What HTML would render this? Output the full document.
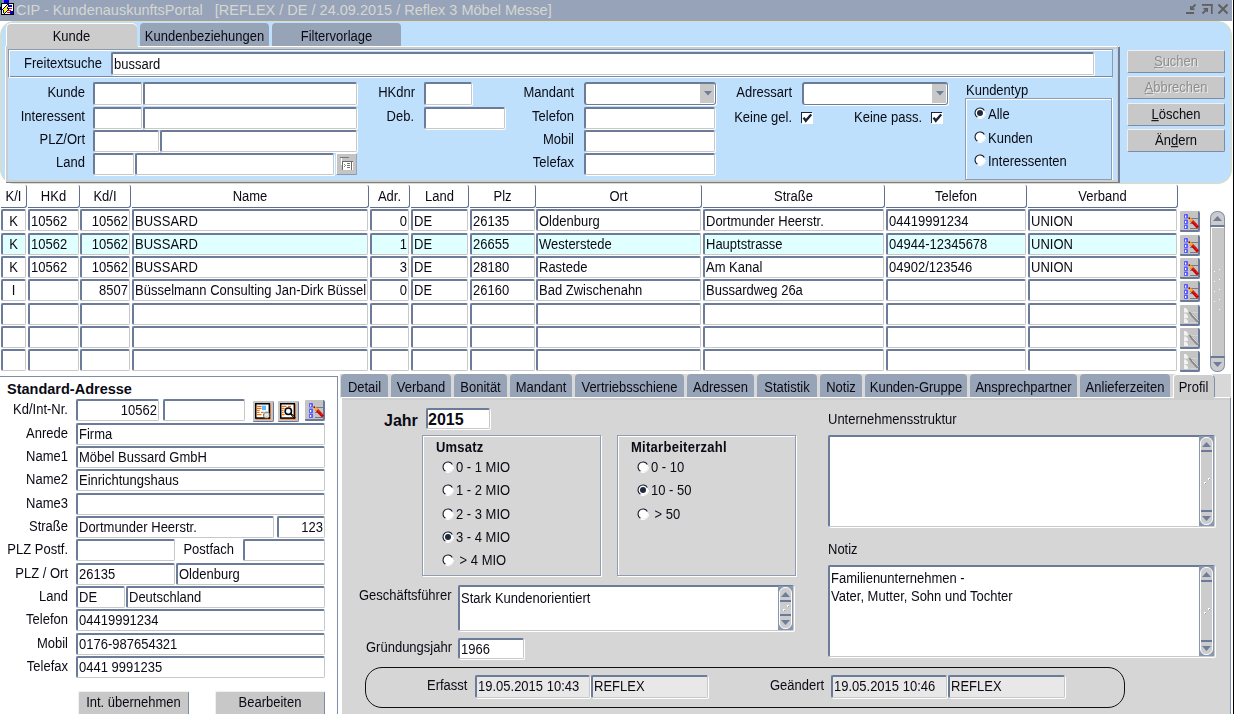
<!DOCTYPE html>
<html><head><meta charset="utf-8">
<style>
*{margin:0;padding:0;box-sizing:border-box}
html,body{width:1234px;height:714px;overflow:hidden;background:#fff}
body{position:relative;font-family:"Liberation Sans",sans-serif;font-size:13px;color:#0a0a14}
div,span,svg{position:absolute}
.t{white-space:pre;line-height:15px;transform:scaleY(1.1);transform-origin:0 12px}
.in{background:#fff;border-top:2px solid #6B7B98;border-left:2px solid #6B7B98;border-right:1px solid #C8C8C8;border-bottom:1px solid #C8C8C8;border-radius:2px;box-shadow:1px 1px 0 #fff}
.tab{background:#97A4B8;border-radius:4px 4px 0 0}
.btn{background:#C8C8C8;border-top:1px solid #F0F0F0;border-left:1px solid #F0F0F0;border-right:1px solid #7D8CA6;border-bottom:1px solid #7D8CA6;border-radius:2px}
.hd{background:#fff;border-right:1px solid #5F6F8E;border-bottom:1px solid #5F6F8E;border-radius:0 2px 3px 0}
</style></head><body>

<div style="left:0px;top:0px;width:1232px;height:21px;background:#97A3B8"></div>
<div style="left:1233px;top:0px;width:1px;height:714px;background:#000"></div>
<svg style="left:0px;top:0px" width="16" height="16" viewBox="0 0 16 16" shape-rendering="crispEdges">
<rect x="0" y="0" width="2" height="7" fill="#3a9a6a"/>
<rect x="2" y="0" width="2" height="3" fill="#8a7ae0"/>
<rect x="4" y="0" width="5" height="3" fill="#0000e0"/>
<rect x="0" y="7" width="1" height="3" fill="#000080"/>
<rect x="1" y="3" width="13" height="12" fill="#000"/>
<rect x="2" y="4" width="11" height="10" fill="#fff"/>
<rect x="9" y="5" width="3" height="2" fill="#0000e0"/>
<rect x="8" y="8" width="4" height="1" fill="#f00000"/>
<rect x="8" y="10" width="3" height="1" fill="#f00000"/>
<rect x="7" y="12" width="3" height="1" fill="#f00000"/>
<rect x="10" y="11" width="3" height="3" fill="#0000e0"/>
<rect x="7" y="4" width="1" height="1" fill="#000090"/>
<rect x="8" y="4" width="1" height="1" fill="#000090"/>
<rect x="6" y="5" width="1" height="1" fill="#000090"/>
<rect x="7" y="5" width="1" height="1" fill="#ffff00"/>
<rect x="8" y="5" width="1" height="1" fill="#000090"/>
<rect x="5" y="6" width="1" height="1" fill="#000090"/>
<rect x="6" y="6" width="1" height="1" fill="#ffff00"/>
<rect x="7" y="6" width="1" height="1" fill="#ffff00"/>
<rect x="8" y="6" width="1" height="1" fill="#000090"/>
<rect x="4" y="7" width="1" height="1" fill="#000090"/>
<rect x="5" y="7" width="1" height="1" fill="#ffff00"/>
<rect x="6" y="7" width="1" height="1" fill="#ffff00"/>
<rect x="7" y="7" width="1" height="1" fill="#000090"/>
<rect x="3" y="8" width="1" height="1" fill="#000090"/>
<rect x="4" y="8" width="1" height="1" fill="#ffff00"/>
<rect x="5" y="8" width="1" height="1" fill="#ffff00"/>
<rect x="6" y="8" width="1" height="1" fill="#ffff00"/>
<rect x="7" y="8" width="1" height="1" fill="#000090"/>
<rect x="8" y="8" width="1" height="1" fill="#000090"/>
<rect x="2" y="9" width="1" height="1" fill="#000090"/>
<rect x="3" y="9" width="1" height="1" fill="#ffff00"/>
<rect x="4" y="9" width="1" height="1" fill="#ffff00"/>
<rect x="5" y="9" width="1" height="1" fill="#ffff00"/>
<rect x="6" y="9" width="1" height="1" fill="#ffff00"/>
<rect x="7" y="9" width="1" height="1" fill="#ffff00"/>
<rect x="8" y="9" width="1" height="1" fill="#000090"/>
<rect x="3" y="10" width="1" height="1" fill="#000090"/>
<rect x="4" y="10" width="1" height="1" fill="#ffff00"/>
<rect x="5" y="10" width="1" height="1" fill="#ffff00"/>
<rect x="6" y="10" width="1" height="1" fill="#ffff00"/>
<rect x="7" y="10" width="1" height="1" fill="#000090"/>
<rect x="3" y="11" width="1" height="1" fill="#000090"/>
<rect x="4" y="11" width="1" height="1" fill="#ffff00"/>
<rect x="5" y="11" width="1" height="1" fill="#ffff00"/>
<rect x="6" y="11" width="1" height="1" fill="#000090"/>
<rect x="3" y="12" width="1" height="1" fill="#000090"/>
<rect x="4" y="12" width="1" height="1" fill="#ffff00"/>
<rect x="5" y="12" width="1" height="1" fill="#000090"/>
<rect x="3" y="13" width="1" height="1" fill="#ffff00"/>
<rect x="4" y="13" width="1" height="1" fill="#000090"/>
</svg>
<span class="t" style="left:16px;top:1px;font-size:14.5px;line-height:18px;color:#D5D7D2;transform:none">CIP - KundenauskunftsPortal   [REFLEX / DE / 24.09.2015 / Reflex 3 Möbel Messe]</span>
<svg style="left:1184px;top:0px" width="46" height="18" viewBox="0 0 46 18">
<g fill="#5F5F5F">
<rect x="2" y="12" width="8" height="2"/>
<rect x="6" y="6" width="1.6" height="4"/><rect x="6" y="8.4" width="4.5" height="1.6"/>
<rect x="18" y="4" width="10.6" height="1.8"/><rect x="27" y="4" width="1.6" height="10"/>
<rect x="19.5" y="8" width="4.5" height="1.6"/><rect x="22.4" y="8" width="1.6" height="4"/>
</g>
<g stroke="#5F5F5F" stroke-width="2" fill="none">
<path d="M11.5 4.5 L6.8 9.2" stroke-width="1.8"/>
<path d="M18.5 13.5 L23.2 8.8" stroke-width="1.8"/>
<path d="M34.5 4.5 L43.5 13.5 M43.5 4.5 L34.5 13.5"/>
</g></svg>
<div style="left:0px;top:21px;width:1232px;height:163px;background:#BEE0FC;border:1px solid #E2DDB5;border-radius:14px;border-top-left-radius:14px"></div>
<div style="left:6px;top:23px;width:131px;height:24px;background:#CCCCCC;border-radius:5px 5px 0 0;border-top:1px solid #fff;border-left:1px solid #fff"></div>
<span class="t" style="left:6px;width:131px;text-align:center;top:29px;font-size:13px;">Kunde</span>
<div style="left:140px;top:23px;width:129px;height:23px;background:#97A4B8;border-radius:4px 4px 0 0"></div>
<span class="t" style="left:140px;width:129px;text-align:center;top:29px;font-size:13px;">Kundenbeziehungen</span>
<div style="left:272px;top:23px;width:129px;height:23px;background:#97A4B8;border-radius:4px 4px 0 0"></div>
<span class="t" style="left:272px;width:129px;text-align:center;top:29px;font-size:13px;">Filtervorlage</span>
<div style="left:5px;top:46px;width:1115px;height:137px;border-left:1px solid #fff;border-top:1px solid #fff"></div>
<div style="left:6px;top:46px;width:1114px;height:137px;border-left:2px solid #CCCCCC;border-bottom:3px solid #D0D0D0;border-right:1px solid #D0D0D0;border-top:0"></div>
<div style="left:1117px;top:47px;width:1px;height:135px;background:#D0D0D0"></div>
<div style="left:1118px;top:47px;width:2px;height:136px;border-right:1px solid #6F7F9B;border-left:1px solid #6F7F9B"></div>
<div style="left:6px;top:182px;width:1114px;height:1px;background:#6F7F9B"></div>
<div style="left:8px;top:46px;width:1110px;height:3px;background:#CCCCCC"></div>
<div style="left:138px;top:46px;width:979px;height:1px;background:#fff"></div>
<div style="left:8px;top:49px;width:1105px;height:29px;border-top:1px solid #8D99AE;border-left:1px solid #8D99AE;border-right:1px solid #8D99AE;border-bottom:1px solid #fff;box-shadow:inset 1px 1px 0 #fff, inset 0 -1px 0 #7A89A3"></div>
<span class="t" style="left:24px;top:56px;font-size:13px;">Freitextsuche</span>
<div class="in" style="left:111px;top:52px;width:983px;height:23px;background:#fff"></div>
<span class="t" style="left:114px;top:57px;font-size:13px;">bussard</span>
<span class="t" style="right:1149px;top:85px;font-size:13px;">Kunde</span>
<span class="t" style="right:1149px;top:109px;font-size:13px;">Interessent</span>
<span class="t" style="right:1149px;top:132px;font-size:13px;">PLZ/Ort</span>
<span class="t" style="right:1149px;top:155px;font-size:13px;">Land</span>
<div class="in" style="left:93px;top:82px;width:49px;height:23px;background:#fff"></div>
<div class="in" style="left:143px;top:82px;width:214px;height:23px;background:#fff"></div>
<div class="in" style="left:93px;top:107px;width:49px;height:22px;background:#fff"></div>
<div class="in" style="left:143px;top:107px;width:214px;height:22px;background:#fff"></div>
<div class="in" style="left:93px;top:130px;width:66px;height:22px;background:#fff"></div>
<div class="in" style="left:160px;top:130px;width:197px;height:22px;background:#fff"></div>
<div class="in" style="left:93px;top:153px;width:41px;height:22px;background:#fff"></div>
<div class="in" style="left:135px;top:153px;width:199px;height:22px;background:#fff"></div>
<div style="left:336px;top:153px;width:21px;height:22px;background:#C4C4C4;border-top:1px solid #fff;border-left:1px solid #fff;border-right:1px solid #9AA6B8;border-bottom:1px solid #8A98B0;border-radius:1px"></div>
<svg style="left:337px;top:154px" width="20" height="20" viewBox="0 0 20 20" shape-rendering="crispEdges">
<rect x="3" y="3" width="9" height="1" fill="#7a7a7a"/>
<rect x="4" y="4" width="1" height="7" fill="#fff"/>
<rect x="5" y="7" width="11" height="1" fill="#6a6a6a"/>
<rect x="5" y="8" width="1" height="8" fill="#6a6a6a"/>
<rect x="6" y="8" width="8" height="8" fill="#fff"/>
<rect x="14" y="8" width="1" height="8" fill="#6a6a6a"/>
<rect x="15" y="8" width="1" height="8" fill="#fff"/>
<rect x="7" y="10" width="1" height="1" fill="#888"/><rect x="8" y="11" width="1" height="1" fill="#888"/><rect x="7" y="12" width="1" height="1" fill="#888"/>
<rect x="10" y="9" width="3" height="1" fill="#777"/><rect x="10" y="11" width="3" height="1" fill="#777"/><rect x="10" y="13" width="3" height="1" fill="#777"/>
</svg>
<span class="t" style="right:819px;top:85px;font-size:13px;">HKdnr</span>
<div class="in" style="left:424px;top:82px;width:48px;height:23px;background:#fff"></div>
<span class="t" style="right:820px;top:109px;font-size:13px;">Deb.</span>
<div class="in" style="left:424px;top:107px;width:81px;height:22px;background:#fff"></div>
<span class="t" style="right:660px;top:85px;font-size:13px;">Mandant</span>
<div style="left:584px;top:82px;width:132px;height:23px;background:#fff;border:2px solid #6B7B98;border-right-width:1.5px;border-bottom-width:1.5px;border-radius:3px;box-shadow:1px 1px 0 #fff"></div>
<div style="left:700px;top:84px;width:14px;height:19px;background:#C8C8C8"></div>
<svg style="left:704px;top:91px" width="8" height="5" viewBox="0 0 8 5"><path d="M0 0H8L4 4.5Z" fill="#6E7E9A"/></svg>
<span class="t" style="right:660px;top:109px;font-size:13px;">Telefon</span>
<div class="in" style="left:584px;top:107px;width:131px;height:22px;background:#fff"></div>
<span class="t" style="right:660px;top:132px;font-size:13px;">Mobil</span>
<div class="in" style="left:584px;top:130px;width:131px;height:22px;background:#fff"></div>
<span class="t" style="right:660px;top:155px;font-size:13px;">Telefax</span>
<div class="in" style="left:584px;top:153px;width:131px;height:22px;background:#fff"></div>
<span class="t" style="right:442px;top:85px;font-size:13px;">Adressart</span>
<div style="left:802px;top:82px;width:146px;height:23px;background:#fff;border:2px solid #6B7B98;border-right-width:1.5px;border-bottom-width:1.5px;border-radius:3px;box-shadow:1px 1px 0 #fff"></div>
<div style="left:932px;top:84px;width:14px;height:19px;background:#C8C8C8"></div>
<svg style="left:936px;top:91px" width="8" height="5" viewBox="0 0 8 5"><path d="M0 0H8L4 4.5Z" fill="#6E7E9A"/></svg>
<span class="t" style="right:442px;top:110px;font-size:13px;">Keine gel.</span>
<span class="t" style="right:312px;top:110px;font-size:13px;">Keine pass.</span>
<div style="left:801px;top:112px;width:11px;height:11px;background:#fff;border-top:1px solid #1A2438;border-left:1px solid #1A2438;box-shadow:1px 1px 0 #fff"></div>
<svg style="left:801px;top:112px" width="11" height="11" viewBox="0 0 11 11"><path d="M2.6 5.6 L4.8 8.8 L10.2 2.4" stroke="#1A2438" stroke-width="2.4" fill="none"/></svg>
<div style="left:931px;top:112px;width:11px;height:11px;background:#fff;border-top:1px solid #1A2438;border-left:1px solid #1A2438;box-shadow:1px 1px 0 #fff"></div>
<svg style="left:931px;top:112px" width="11" height="11" viewBox="0 0 11 11"><path d="M2.6 5.6 L4.8 8.8 L10.2 2.4" stroke="#1A2438" stroke-width="2.4" fill="none"/></svg>
<span class="t" style="left:966px;top:83px;font-size:13px;">Kundentyp</span>
<div style="left:965px;top:98px;width:147px;height:82px;border-top:1px solid #8F9CB2;border-left:1px solid #8F9CB2;border-right:1px solid #8F9CB2;border-bottom:1px solid #8F9CB2;box-shadow:inset 1px 1px 0 #fff, 1px 0 0 #fff"></div>
<svg style="left:974px;top:107px" width="12" height="12" viewBox="0 0 12 12"><circle cx="6" cy="6" r="5" fill="#fff"/><path d="M3.5 10.33 A5 5 0 1 1 10.33 3.5" stroke="#101828" stroke-width="1.1" fill="none"/><path d="M11.5 6 A5.5 5.5 0 0 1 3.25 10.76" stroke="#fff" stroke-width="1" fill="none"/><circle cx="6" cy="6" r="3" fill="#1F2A40"/></svg>
<span class="t" style="left:988px;top:107px;font-size:13px;">Alle</span>
<svg style="left:974px;top:131px" width="12" height="12" viewBox="0 0 12 12"><circle cx="6" cy="6" r="5" fill="#fff"/><path d="M3.5 10.33 A5 5 0 1 1 10.33 3.5" stroke="#101828" stroke-width="1.1" fill="none"/><path d="M11.5 6 A5.5 5.5 0 0 1 3.25 10.76" stroke="#fff" stroke-width="1" fill="none"/></svg>
<span class="t" style="left:988px;top:131px;font-size:13px;">Kunden</span>
<svg style="left:974px;top:154px" width="12" height="12" viewBox="0 0 12 12"><circle cx="6" cy="6" r="5" fill="#fff"/><path d="M3.5 10.33 A5 5 0 1 1 10.33 3.5" stroke="#101828" stroke-width="1.1" fill="none"/><path d="M11.5 6 A5.5 5.5 0 0 1 3.25 10.76" stroke="#fff" stroke-width="1" fill="none"/></svg>
<span class="t" style="left:988px;top:154px;font-size:13px;">Interessenten</span>
<div class="btn" style="left:1127px;top:50px;width:98px;height:23px"></div>
<span class="t" style="left:1127px;width:98px;text-align:center;top:54px;font-size:13px;color:#8E8E8E;text-shadow:1px 1px 0 #eee"><u>S</u>uchen</span>
<div class="btn" style="left:1127px;top:76px;width:98px;height:23px"></div>
<span class="t" style="left:1127px;width:98px;text-align:center;top:80px;font-size:13px;color:#8E8E8E;text-shadow:1px 1px 0 #eee"><u>A</u>bbrechen</span>
<div class="btn" style="left:1127px;top:103px;width:98px;height:23px"></div>
<span class="t" style="left:1127px;width:98px;text-align:center;top:107px;font-size:13px;color:#0a0a14"><u>L</u>öschen</span>
<div class="btn" style="left:1127px;top:129px;width:98px;height:23px"></div>
<span class="t" style="left:1127px;width:98px;text-align:center;top:133px;font-size:13px;color:#0a0a14">Än<u>d</u>ern</span>
<div class="hd" style="left:1px;top:185px;width:26px;height:23px"></div>
<span class="t" style="left:1px;width:25px;text-align:center;top:189px;font-size:13px;">K/I</span>
<div class="hd" style="left:28px;top:185px;width:52px;height:23px"></div>
<span class="t" style="left:28px;width:51px;text-align:center;top:189px;font-size:13px;">HKd</span>
<div class="hd" style="left:80px;top:185px;width:51px;height:23px"></div>
<span class="t" style="left:80px;width:50px;text-align:center;top:189px;font-size:13px;">Kd/I</span>
<div class="hd" style="left:132px;top:185px;width:237px;height:23px"></div>
<span class="t" style="left:132px;width:236px;text-align:center;top:189px;font-size:13px;">Name</span>
<div class="hd" style="left:370px;top:185px;width:40px;height:23px"></div>
<span class="t" style="left:370px;width:39px;text-align:center;top:189px;font-size:13px;">Adr.</span>
<div class="hd" style="left:411px;top:185px;width:58px;height:23px"></div>
<span class="t" style="left:411px;width:57px;text-align:center;top:189px;font-size:13px;">Land</span>
<div class="hd" style="left:470px;top:185px;width:66px;height:23px"></div>
<span class="t" style="left:470px;width:65px;text-align:center;top:189px;font-size:13px;">Plz</span>
<div class="hd" style="left:536px;top:185px;width:166px;height:23px"></div>
<span class="t" style="left:536px;width:165px;text-align:center;top:189px;font-size:13px;">Ort</span>
<div class="hd" style="left:703px;top:185px;width:182px;height:23px"></div>
<span class="t" style="left:703px;width:181px;text-align:center;top:189px;font-size:13px;">Straße</span>
<div class="hd" style="left:886px;top:185px;width:141px;height:23px"></div>
<span class="t" style="left:886px;width:140px;text-align:center;top:189px;font-size:13px;">Telefon</span>
<div class="hd" style="left:1028px;top:185px;width:150px;height:23px"></div>
<span class="t" style="left:1028px;width:149px;text-align:center;top:189px;font-size:13px;">Verband</span>
<div class="in" style="left:1px;top:209px;width:25px;height:22px;background:#fff"></div>
<span class="t" style="left:1px;width:25px;text-align:center;top:214px;font-size:13px;">K</span>
<div class="in" style="left:28px;top:209px;width:51px;height:22px;background:#fff"></div>
<span class="t" style="left:31px;top:214px;font-size:13px;">10562</span>
<div class="in" style="left:80px;top:209px;width:50px;height:22px;background:#fff"></div>
<span class="t" style="right:1106px;top:214px;font-size:13px;">10562</span>
<div class="in" style="left:132px;top:209px;width:236px;height:22px;background:#fff"></div>
<div style="left:134px;top:211px;width:233px;height:19px;overflow:hidden"><span class="t" style="left:1px;top:3px">BUSSARD</span></div>
<div class="in" style="left:370px;top:209px;width:39px;height:22px;background:#fff"></div>
<span class="t" style="right:827px;top:214px;font-size:13px;">0</span>
<div class="in" style="left:411px;top:209px;width:57px;height:22px;background:#fff"></div>
<span class="t" style="left:414px;top:214px;font-size:13px;">DE</span>
<div class="in" style="left:470px;top:209px;width:65px;height:22px;background:#fff"></div>
<span class="t" style="left:473px;top:214px;font-size:13px;">26135</span>
<div class="in" style="left:536px;top:209px;width:165px;height:22px;background:#fff"></div>
<span class="t" style="left:539px;top:214px;font-size:13px;">Oldenburg</span>
<div class="in" style="left:703px;top:209px;width:181px;height:22px;background:#fff"></div>
<span class="t" style="left:706px;top:214px;font-size:13px;">Dortmunder Heerstr.</span>
<div class="in" style="left:886px;top:209px;width:140px;height:22px;background:#fff"></div>
<span class="t" style="left:889px;top:214px;font-size:13px;">04419991234</span>
<div class="in" style="left:1028px;top:209px;width:149px;height:22px;background:#fff"></div>
<span class="t" style="left:1031px;top:214px;font-size:13px;">UNION</span>
<div style="left:1180px;top:211px;width:20px;height:21px;background:#C4C4C4;border-right:2px solid #6A7A98;border-bottom:2px solid #6A7A98;border-radius:1px 2px 2px 1px"></div>
<svg style="left:1180px;top:211px" width="20" height="21" viewBox="0 0 20 21">
<g fill="#5858FF"><rect x="4" y="3" width="4" height="4.5" rx="0.8"/><rect x="4" y="8.5" width="4" height="4.5" rx="0.8"/><rect x="4" y="13.5" width="4" height="4.5" rx="0.8"/></g>
<g fill="#fff"><rect x="5" y="4.5" width="1.2" height="2"/><rect x="5" y="10" width="1.2" height="2"/><rect x="5" y="15" width="1.2" height="2"/></g>
<path d="M10 7.5h8M10 12.5h3M10 17.5h8" stroke="#7a7a7a" stroke-width="1"/>
<path d="M11.5 9.5 L18 16.5" stroke="#D00000" stroke-width="3.2"/>
<path d="M12.5 9.8 L17.5 15.2" stroke="#ff8080" stroke-width="0.7" stroke-dasharray="1 1"/>
<path d="M9.6 7.4 L12.2 10.2" stroke="#F0B030" stroke-width="2.4"/>
<circle cx="9.3" cy="7.2" r="0.9" fill="#900"/>
</svg>
<div class="in" style="left:1px;top:233px;width:25px;height:22px;background:#E0FFFF"></div>
<span class="t" style="left:1px;width:25px;text-align:center;top:237px;font-size:13px;">K</span>
<div class="in" style="left:28px;top:233px;width:51px;height:22px;background:#E0FFFF"></div>
<span class="t" style="left:31px;top:237px;font-size:13px;">10562</span>
<div class="in" style="left:80px;top:233px;width:50px;height:22px;background:#E0FFFF"></div>
<span class="t" style="right:1106px;top:237px;font-size:13px;">10562</span>
<div class="in" style="left:132px;top:233px;width:236px;height:22px;background:#E0FFFF"></div>
<div style="left:134px;top:235px;width:233px;height:19px;overflow:hidden"><span class="t" style="left:1px;top:2px">BUSSARD</span></div>
<div class="in" style="left:370px;top:233px;width:39px;height:22px;background:#E0FFFF"></div>
<span class="t" style="right:827px;top:237px;font-size:13px;">1</span>
<div class="in" style="left:411px;top:233px;width:57px;height:22px;background:#E0FFFF"></div>
<span class="t" style="left:414px;top:237px;font-size:13px;">DE</span>
<div class="in" style="left:470px;top:233px;width:65px;height:22px;background:#E0FFFF"></div>
<span class="t" style="left:473px;top:237px;font-size:13px;">26655</span>
<div class="in" style="left:536px;top:233px;width:165px;height:22px;background:#E0FFFF"></div>
<span class="t" style="left:539px;top:237px;font-size:13px;">Westerstede</span>
<div class="in" style="left:703px;top:233px;width:181px;height:22px;background:#E0FFFF"></div>
<span class="t" style="left:706px;top:237px;font-size:13px;">Hauptstrasse</span>
<div class="in" style="left:886px;top:233px;width:140px;height:22px;background:#E0FFFF"></div>
<span class="t" style="left:889px;top:237px;font-size:13px;">04944-12345678</span>
<div class="in" style="left:1028px;top:233px;width:149px;height:22px;background:#E0FFFF"></div>
<span class="t" style="left:1031px;top:237px;font-size:13px;">UNION</span>
<div style="left:1180px;top:235px;width:20px;height:21px;background:#C4C4C4;border-right:2px solid #6A7A98;border-bottom:2px solid #6A7A98;border-radius:1px 2px 2px 1px"></div>
<svg style="left:1180px;top:235px" width="20" height="21" viewBox="0 0 20 21">
<g fill="#5858FF"><rect x="4" y="3" width="4" height="4.5" rx="0.8"/><rect x="4" y="8.5" width="4" height="4.5" rx="0.8"/><rect x="4" y="13.5" width="4" height="4.5" rx="0.8"/></g>
<g fill="#fff"><rect x="5" y="4.5" width="1.2" height="2"/><rect x="5" y="10" width="1.2" height="2"/><rect x="5" y="15" width="1.2" height="2"/></g>
<path d="M10 7.5h8M10 12.5h3M10 17.5h8" stroke="#7a7a7a" stroke-width="1"/>
<path d="M11.5 9.5 L18 16.5" stroke="#D00000" stroke-width="3.2"/>
<path d="M12.5 9.8 L17.5 15.2" stroke="#ff8080" stroke-width="0.7" stroke-dasharray="1 1"/>
<path d="M9.6 7.4 L12.2 10.2" stroke="#F0B030" stroke-width="2.4"/>
<circle cx="9.3" cy="7.2" r="0.9" fill="#900"/>
</svg>
<div class="in" style="left:1px;top:256px;width:25px;height:22px;background:#fff"></div>
<span class="t" style="left:1px;width:25px;text-align:center;top:260px;font-size:13px;">K</span>
<div class="in" style="left:28px;top:256px;width:51px;height:22px;background:#fff"></div>
<span class="t" style="left:31px;top:260px;font-size:13px;">10562</span>
<div class="in" style="left:80px;top:256px;width:50px;height:22px;background:#fff"></div>
<span class="t" style="right:1106px;top:260px;font-size:13px;">10562</span>
<div class="in" style="left:132px;top:256px;width:236px;height:22px;background:#fff"></div>
<div style="left:134px;top:258px;width:233px;height:19px;overflow:hidden"><span class="t" style="left:1px;top:2px">BUSSARD</span></div>
<div class="in" style="left:370px;top:256px;width:39px;height:22px;background:#fff"></div>
<span class="t" style="right:827px;top:260px;font-size:13px;">3</span>
<div class="in" style="left:411px;top:256px;width:57px;height:22px;background:#fff"></div>
<span class="t" style="left:414px;top:260px;font-size:13px;">DE</span>
<div class="in" style="left:470px;top:256px;width:65px;height:22px;background:#fff"></div>
<span class="t" style="left:473px;top:260px;font-size:13px;">28180</span>
<div class="in" style="left:536px;top:256px;width:165px;height:22px;background:#fff"></div>
<span class="t" style="left:539px;top:260px;font-size:13px;">Rastede</span>
<div class="in" style="left:703px;top:256px;width:181px;height:22px;background:#fff"></div>
<span class="t" style="left:706px;top:260px;font-size:13px;">Am Kanal</span>
<div class="in" style="left:886px;top:256px;width:140px;height:22px;background:#fff"></div>
<span class="t" style="left:889px;top:260px;font-size:13px;">04902/123546</span>
<div class="in" style="left:1028px;top:256px;width:149px;height:22px;background:#fff"></div>
<span class="t" style="left:1031px;top:260px;font-size:13px;">UNION</span>
<div style="left:1180px;top:258px;width:20px;height:21px;background:#C4C4C4;border-right:2px solid #6A7A98;border-bottom:2px solid #6A7A98;border-radius:1px 2px 2px 1px"></div>
<svg style="left:1180px;top:258px" width="20" height="21" viewBox="0 0 20 21">
<g fill="#5858FF"><rect x="4" y="3" width="4" height="4.5" rx="0.8"/><rect x="4" y="8.5" width="4" height="4.5" rx="0.8"/><rect x="4" y="13.5" width="4" height="4.5" rx="0.8"/></g>
<g fill="#fff"><rect x="5" y="4.5" width="1.2" height="2"/><rect x="5" y="10" width="1.2" height="2"/><rect x="5" y="15" width="1.2" height="2"/></g>
<path d="M10 7.5h8M10 12.5h3M10 17.5h8" stroke="#7a7a7a" stroke-width="1"/>
<path d="M11.5 9.5 L18 16.5" stroke="#D00000" stroke-width="3.2"/>
<path d="M12.5 9.8 L17.5 15.2" stroke="#ff8080" stroke-width="0.7" stroke-dasharray="1 1"/>
<path d="M9.6 7.4 L12.2 10.2" stroke="#F0B030" stroke-width="2.4"/>
<circle cx="9.3" cy="7.2" r="0.9" fill="#900"/>
</svg>
<div class="in" style="left:1px;top:279px;width:25px;height:22px;background:#fff"></div>
<span class="t" style="left:1px;width:25px;text-align:center;top:283px;font-size:13px;">I</span>
<div class="in" style="left:28px;top:279px;width:51px;height:22px;background:#fff"></div>
<div class="in" style="left:80px;top:279px;width:50px;height:22px;background:#fff"></div>
<span class="t" style="right:1106px;top:283px;font-size:13px;">8507</span>
<div class="in" style="left:132px;top:279px;width:236px;height:22px;background:#fff"></div>
<div style="left:134px;top:281px;width:233px;height:19px;overflow:hidden"><span class="t" style="left:1px;top:2px">Büsselmann Consulting Jan-Dirk Büsselmann</span></div>
<div class="in" style="left:370px;top:279px;width:39px;height:22px;background:#fff"></div>
<span class="t" style="right:827px;top:283px;font-size:13px;">0</span>
<div class="in" style="left:411px;top:279px;width:57px;height:22px;background:#fff"></div>
<span class="t" style="left:414px;top:283px;font-size:13px;">DE</span>
<div class="in" style="left:470px;top:279px;width:65px;height:22px;background:#fff"></div>
<span class="t" style="left:473px;top:283px;font-size:13px;">26160</span>
<div class="in" style="left:536px;top:279px;width:165px;height:22px;background:#fff"></div>
<span class="t" style="left:539px;top:283px;font-size:13px;">Bad Zwischenahn</span>
<div class="in" style="left:703px;top:279px;width:181px;height:22px;background:#fff"></div>
<span class="t" style="left:706px;top:283px;font-size:13px;">Bussardweg 26a</span>
<div class="in" style="left:886px;top:279px;width:140px;height:22px;background:#fff"></div>
<div class="in" style="left:1028px;top:279px;width:149px;height:22px;background:#fff"></div>
<div style="left:1180px;top:281px;width:20px;height:21px;background:#C4C4C4;border-right:2px solid #6A7A98;border-bottom:2px solid #6A7A98;border-radius:1px 2px 2px 1px"></div>
<svg style="left:1180px;top:281px" width="20" height="21" viewBox="0 0 20 21">
<g fill="#5858FF"><rect x="4" y="3" width="4" height="4.5" rx="0.8"/><rect x="4" y="8.5" width="4" height="4.5" rx="0.8"/><rect x="4" y="13.5" width="4" height="4.5" rx="0.8"/></g>
<g fill="#fff"><rect x="5" y="4.5" width="1.2" height="2"/><rect x="5" y="10" width="1.2" height="2"/><rect x="5" y="15" width="1.2" height="2"/></g>
<path d="M10 7.5h8M10 12.5h3M10 17.5h8" stroke="#7a7a7a" stroke-width="1"/>
<path d="M11.5 9.5 L18 16.5" stroke="#D00000" stroke-width="3.2"/>
<path d="M12.5 9.8 L17.5 15.2" stroke="#ff8080" stroke-width="0.7" stroke-dasharray="1 1"/>
<path d="M9.6 7.4 L12.2 10.2" stroke="#F0B030" stroke-width="2.4"/>
<circle cx="9.3" cy="7.2" r="0.9" fill="#900"/>
</svg>
<div class="in" style="left:1px;top:303px;width:25px;height:22px;background:#fff"></div>
<div class="in" style="left:28px;top:303px;width:51px;height:22px;background:#fff"></div>
<div class="in" style="left:80px;top:303px;width:50px;height:22px;background:#fff"></div>
<div class="in" style="left:132px;top:303px;width:236px;height:22px;background:#fff"></div>
<div class="in" style="left:370px;top:303px;width:39px;height:22px;background:#fff"></div>
<div class="in" style="left:411px;top:303px;width:57px;height:22px;background:#fff"></div>
<div class="in" style="left:470px;top:303px;width:65px;height:22px;background:#fff"></div>
<div class="in" style="left:536px;top:303px;width:165px;height:22px;background:#fff"></div>
<div class="in" style="left:703px;top:303px;width:181px;height:22px;background:#fff"></div>
<div class="in" style="left:886px;top:303px;width:140px;height:22px;background:#fff"></div>
<div class="in" style="left:1028px;top:303px;width:149px;height:22px;background:#fff"></div>
<div style="left:1180px;top:305px;width:20px;height:21px;background:#C4C4C4;border-right:2px solid #6A7A98;border-bottom:2px solid #6A7A98;border-radius:1px 2px 2px 1px"></div>
<svg style="left:1180px;top:305px" width="20" height="21" viewBox="0 0 20 21">
<g fill="#f2f2f2"><path d="M4 3h2l2 2.5v2h-4z"/><path d="M4 8.5h2l2 2.5v2h-4z"/><path d="M4 13.5h2l2 2.5v2h-4z"/></g>
<path d="M10 7.5h8M10 17.5h8" stroke="#d2d2d2" stroke-width="1"/>
<path d="M11 9 L18 16.5" stroke="#8a8a8a" stroke-width="2.6"/>
<path d="M11.5 8.3 L18.3 15.6" stroke="#e8e8e8" stroke-width="0.9"/>
<path d="M9.4 7.2 L11.2 9.2" stroke="#7a7a7a" stroke-width="1.4"/>
</svg>
<div class="in" style="left:1px;top:326px;width:25px;height:22px;background:#fff"></div>
<div class="in" style="left:28px;top:326px;width:51px;height:22px;background:#fff"></div>
<div class="in" style="left:80px;top:326px;width:50px;height:22px;background:#fff"></div>
<div class="in" style="left:132px;top:326px;width:236px;height:22px;background:#fff"></div>
<div class="in" style="left:370px;top:326px;width:39px;height:22px;background:#fff"></div>
<div class="in" style="left:411px;top:326px;width:57px;height:22px;background:#fff"></div>
<div class="in" style="left:470px;top:326px;width:65px;height:22px;background:#fff"></div>
<div class="in" style="left:536px;top:326px;width:165px;height:22px;background:#fff"></div>
<div class="in" style="left:703px;top:326px;width:181px;height:22px;background:#fff"></div>
<div class="in" style="left:886px;top:326px;width:140px;height:22px;background:#fff"></div>
<div class="in" style="left:1028px;top:326px;width:149px;height:22px;background:#fff"></div>
<div style="left:1180px;top:328px;width:20px;height:21px;background:#C4C4C4;border-right:2px solid #6A7A98;border-bottom:2px solid #6A7A98;border-radius:1px 2px 2px 1px"></div>
<svg style="left:1180px;top:328px" width="20" height="21" viewBox="0 0 20 21">
<g fill="#f2f2f2"><path d="M4 3h2l2 2.5v2h-4z"/><path d="M4 8.5h2l2 2.5v2h-4z"/><path d="M4 13.5h2l2 2.5v2h-4z"/></g>
<path d="M10 7.5h8M10 17.5h8" stroke="#d2d2d2" stroke-width="1"/>
<path d="M11 9 L18 16.5" stroke="#8a8a8a" stroke-width="2.6"/>
<path d="M11.5 8.3 L18.3 15.6" stroke="#e8e8e8" stroke-width="0.9"/>
<path d="M9.4 7.2 L11.2 9.2" stroke="#7a7a7a" stroke-width="1.4"/>
</svg>
<div class="in" style="left:1px;top:349px;width:25px;height:22px;background:#fff"></div>
<div class="in" style="left:28px;top:349px;width:51px;height:22px;background:#fff"></div>
<div class="in" style="left:80px;top:349px;width:50px;height:22px;background:#fff"></div>
<div class="in" style="left:132px;top:349px;width:236px;height:22px;background:#fff"></div>
<div class="in" style="left:370px;top:349px;width:39px;height:22px;background:#fff"></div>
<div class="in" style="left:411px;top:349px;width:57px;height:22px;background:#fff"></div>
<div class="in" style="left:470px;top:349px;width:65px;height:22px;background:#fff"></div>
<div class="in" style="left:536px;top:349px;width:165px;height:22px;background:#fff"></div>
<div class="in" style="left:703px;top:349px;width:181px;height:22px;background:#fff"></div>
<div class="in" style="left:886px;top:349px;width:140px;height:22px;background:#fff"></div>
<div class="in" style="left:1028px;top:349px;width:149px;height:22px;background:#fff"></div>
<div style="left:1180px;top:351px;width:20px;height:21px;background:#C4C4C4;border-right:2px solid #6A7A98;border-bottom:2px solid #6A7A98;border-radius:1px 2px 2px 1px"></div>
<svg style="left:1180px;top:351px" width="20" height="21" viewBox="0 0 20 21">
<g fill="#f2f2f2"><path d="M4 3h2l2 2.5v2h-4z"/><path d="M4 8.5h2l2 2.5v2h-4z"/><path d="M4 13.5h2l2 2.5v2h-4z"/></g>
<path d="M10 7.5h8M10 17.5h8" stroke="#d2d2d2" stroke-width="1"/>
<path d="M11 9 L18 16.5" stroke="#8a8a8a" stroke-width="2.6"/>
<path d="M11.5 8.3 L18.3 15.6" stroke="#e8e8e8" stroke-width="0.9"/>
<path d="M9.4 7.2 L11.2 9.2" stroke="#7a7a7a" stroke-width="1.4"/>
</svg>
<div style="left:1210px;top:211px;width:15px;height:161px;background:#C8C8C8;border:1px solid #A4A4A4;border-radius:7px;box-shadow:inset 1px 0 0 #fff"></div>
<div style="left:1210px;top:211px;width:15px;height:16px;background:#CCCCCC;border:1px solid #8090AA;border-bottom:2px solid #6A7A98;border-radius:7px 7px 0 0;box-shadow:0 -1px 0 #fff"></div>
<div style="left:1210px;top:356px;width:15px;height:16px;background:#CCCCCC;border:1px solid #8090AA;border-top:2px solid #6A7A98;border-radius:0 0 7px 7px;box-shadow:0 1px 0 #fff"></div>
<div style="left:1211px;top:227px;width:13px;height:1px;background:#fff"></div>
<svg style="left:1213px;top:216px" width="9" height="5" viewBox="0 0 9 5"><path d="M0 5H9L4.5 0Z" fill="#6E7E9A"/></svg>
<svg style="left:1213px;top:362px" width="9" height="5" viewBox="0 0 9 5"><path d="M0 0H9L4.5 5Z" fill="#6E7E9A"/></svg>
<svg style="left:1213px;top:268px" width="9" height="44" viewBox="0 0 9 44"><g fill="#fff"><rect x="1" y="3" width="1" height="1"/><rect x="6" y="1" width="1" height="1"/><rect x="1" y="13" width="1" height="1"/><rect x="6" y="11" width="1" height="1"/><rect x="1" y="23" width="1" height="1"/><rect x="6" y="21" width="1" height="1"/><rect x="1" y="33" width="1" height="1"/><rect x="6" y="31" width="1" height="1"/><rect x="6" y="41" width="1" height="1"/></g></svg>

<div style="left:0px;top:376px;width:338px;height:1px;background:#7F8EA8"></div>
<div style="left:337px;top:376px;width:1px;height:338px;background:#7F8EA8"></div>
<span class="t" style="left:7px;top:381px;font-size:14.5px;font-weight:bold;line-height:17px;transform:none">Standard-Adresse</span>
<span class="t" style="right:1166px;top:402px;font-size:13px;">Kd/Int-Nr.</span>
<span class="t" style="right:1166px;top:426px;font-size:13px;">Anrede</span>
<span class="t" style="right:1166px;top:449px;font-size:13px;">Name1</span>
<span class="t" style="right:1166px;top:472px;font-size:13px;">Name2</span>
<span class="t" style="right:1166px;top:496px;font-size:13px;">Name3</span>
<span class="t" style="right:1166px;top:519px;font-size:13px;">Straße</span>
<span class="t" style="right:1166px;top:542px;font-size:13px;">PLZ Postf.</span>
<span class="t" style="right:1166px;top:566px;font-size:13px;">PLZ / Ort</span>
<span class="t" style="right:1166px;top:589px;font-size:13px;">Land</span>
<span class="t" style="right:1166px;top:612px;font-size:13px;">Telefon</span>
<span class="t" style="right:1166px;top:636px;font-size:13px;">Mobil</span>
<span class="t" style="right:1166px;top:659px;font-size:13px;">Telefax</span>
<div style="left:253px;top:401px;width:21px;height:21px;background:#C4C4C4;border-right:1px solid #6A7A98;border-bottom:1px solid #6A7A98;border-radius:1px 2px 2px 1px"></div>
<div style="left:278px;top:401px;width:21px;height:21px;background:#C4C4C4;border-right:1px solid #6A7A98;border-bottom:1px solid #6A7A98;border-radius:1px 2px 2px 1px"></div>
<div style="left:305px;top:400px;width:20px;height:21px;background:#C4C4C4;border-right:2px solid #6A7A98;border-bottom:2px solid #6A7A98;border-radius:1px 2px 2px 1px"></div>
<svg style="left:253px;top:401px" width="21" height="21" viewBox="0 0 21 21">
<rect x="16.3" y="3.5" width="1.4" height="14.5" fill="#FF6A00"/><rect x="3" y="17.2" width="14.7" height="1.3" fill="#FF6A00"/>
<rect x="2.75" y="2.75" width="13.6" height="14.3" fill="#fff" stroke="#000" stroke-width="1.5"/>
<g fill="#FF6A00"><rect x="4" y="4.8" width="4.5" height="1.2"/><rect x="4" y="6.8" width="4.5" height="1.2"/><rect x="4" y="8.8" width="2.6" height="1.2"/><rect x="4" y="10.8" width="2.6" height="1.2"/><rect x="8" y="10.8" width="2.6" height="1.2"/><rect x="4" y="13" width="4.5" height="1.2"/></g>
<rect x="9" y="4.6" width="4" height="4.6" fill="#58BEFF"/>
<circle cx="13.6" cy="14.2" r="3.1" fill="#d0d0d0" stroke="#222" stroke-width="1" stroke-dasharray="1.2 0.8"/>
<path d="M11.5 16 L15.5 12.2 M11.8 12.5 L15.6 16" stroke="#fff" stroke-width="0.8"/>
</svg>
<svg style="left:278px;top:401px" width="21" height="21" viewBox="0 0 21 21">
<rect x="16.3" y="3.5" width="1.4" height="14.5" fill="#FF6A00"/><rect x="3" y="17.2" width="14.7" height="1.3" fill="#FF6A00"/>
<rect x="2.75" y="2.75" width="13.6" height="14.3" fill="#fff" stroke="#000" stroke-width="1.5"/>
<g fill="#FF6A00"><rect x="4" y="4.8" width="4.5" height="1.2"/><rect x="10" y="4.8" width="3" height="1.2"/><rect x="4" y="6.8" width="2.6" height="1.2"/><rect x="4" y="8.8" width="1.6" height="1.2"/><rect x="4" y="10.8" width="1.6" height="1.2"/><rect x="4" y="13" width="2.6" height="1.2"/></g>
<circle cx="10.3" cy="10.3" r="3.2" fill="#D8F4FF" stroke="#000" stroke-width="1.5"/>
<circle cx="10.3" cy="10.3" r="1.3" fill="#fff"/>
<path d="M12.6 12.6 L17 17" stroke="#000" stroke-width="1.9"/>
<path d="M14.2 14.2 L16.2 16.2" stroke="#FF6A00" stroke-width="0.8"/>
</svg>
<svg style="left:305px;top:400px" width="20" height="21" viewBox="0 0 20 21">
<g fill="#5858FF"><rect x="4" y="3" width="4" height="4.5" rx="0.8"/><rect x="4" y="8.5" width="4" height="4.5" rx="0.8"/><rect x="4" y="13.5" width="4" height="4.5" rx="0.8"/></g>
<g fill="#fff"><rect x="5" y="4.5" width="1.2" height="2"/><rect x="5" y="10" width="1.2" height="2"/><rect x="5" y="15" width="1.2" height="2"/></g>
<path d="M10 7.5h8M10 12.5h3M10 17.5h8" stroke="#7a7a7a" stroke-width="1"/>
<path d="M11.5 9.5 L18 16.5" stroke="#D00000" stroke-width="3.2"/>
<path d="M12.5 9.8 L17.5 15.2" stroke="#ff8080" stroke-width="0.7" stroke-dasharray="1 1"/>
<path d="M9.6 7.4 L12.2 10.2" stroke="#F0B030" stroke-width="2.4"/>
<circle cx="9.3" cy="7.2" r="0.9" fill="#900"/>
</svg>
<div class="in" style="left:76px;top:399px;width:83px;height:22px;background:#fff"></div>
<span class="t" style="right:1077px;top:403px;font-size:13px;">10562</span>
<div class="in" style="left:163px;top:399px;width:82px;height:22px;background:#fff"></div>
<div class="in" style="left:76px;top:423px;width:249px;height:22px;background:#fff"></div>
<span class="t" style="left:79px;top:427px;font-size:13px;">Firma</span>
<div class="in" style="left:76px;top:446px;width:249px;height:22px;background:#fff"></div>
<span class="t" style="left:79px;top:450px;font-size:13px;">Möbel Bussard GmbH</span>
<div class="in" style="left:76px;top:469px;width:249px;height:22px;background:#fff"></div>
<span class="t" style="left:79px;top:473px;font-size:13px;">Einrichtungshaus</span>
<div class="in" style="left:76px;top:493px;width:249px;height:22px;background:#fff"></div>
<div class="in" style="left:76px;top:516px;width:198px;height:22px;background:#fff"></div>
<span class="t" style="left:79px;top:520px;font-size:13px;">Dortmunder Heerstr.</span>
<div class="in" style="left:277px;top:516px;width:48px;height:22px;background:#fff"></div>
<span class="t" style="right:911px;top:520px;font-size:13px;">123</span>
<div class="in" style="left:76px;top:539px;width:99px;height:22px;background:#fff"></div>
<span class="t" style="right:1000px;top:542px;font-size:13px;">Postfach</span>
<div class="in" style="left:243px;top:539px;width:82px;height:22px;background:#fff"></div>
<div class="in" style="left:76px;top:563px;width:99px;height:22px;background:#fff"></div>
<span class="t" style="left:79px;top:567px;font-size:13px;">26135</span>
<div class="in" style="left:176px;top:563px;width:149px;height:22px;background:#fff"></div>
<span class="t" style="left:179px;top:567px;font-size:13px;">Oldenburg</span>
<div class="in" style="left:76px;top:586px;width:49px;height:22px;background:#fff"></div>
<span class="t" style="left:79px;top:590px;font-size:13px;">DE</span>
<div class="in" style="left:126px;top:586px;width:199px;height:22px;background:#fff"></div>
<span class="t" style="left:129px;top:590px;font-size:13px;">Deutschland</span>
<div class="in" style="left:76px;top:609px;width:249px;height:22px;background:#fff"></div>
<span class="t" style="left:79px;top:613px;font-size:13px;">04419991234</span>
<div class="in" style="left:76px;top:633px;width:249px;height:22px;background:#fff"></div>
<span class="t" style="left:79px;top:637px;font-size:13px;">0176-987654321</span>
<div class="in" style="left:76px;top:656px;width:249px;height:22px;background:#fff"></div>
<span class="t" style="left:79px;top:660px;font-size:13px;">0441 9991235</span>
<div class="btn" style="left:78px;top:691px;width:111px;height:30px"></div>
<span class="t" style="left:78px;width:111px;text-align:center;top:695px;font-size:13px;">Int. übernehmen</span>
<div class="btn" style="left:215px;top:691px;width:110px;height:30px"></div>
<span class="t" style="left:215px;width:110px;text-align:center;top:695px;font-size:13px;">Bearbeiten</span>
<div style="left:340px;top:374px;width:891px;height:24px;background:#D8D8D8"></div>
<div class="tab" style="left:341px;top:374px;width:47px;height:23px"></div>
<span class="t" style="left:341px;width:47px;text-align:center;top:380px;font-size:13px;">Detail</span>
<div class="tab" style="left:391px;top:374px;width:60px;height:23px"></div>
<span class="t" style="left:391px;width:60px;text-align:center;top:380px;font-size:13px;">Verband</span>
<div class="tab" style="left:454px;top:374px;width:53px;height:23px"></div>
<span class="t" style="left:454px;width:53px;text-align:center;top:380px;font-size:13px;">Bonität</span>
<div class="tab" style="left:510px;top:374px;width:62px;height:23px"></div>
<span class="t" style="left:510px;width:62px;text-align:center;top:380px;font-size:13px;">Mandant</span>
<div class="tab" style="left:575px;top:374px;width:109px;height:23px"></div>
<span class="t" style="left:575px;width:109px;text-align:center;top:380px;font-size:13px;">Vertriebsschiene</span>
<div class="tab" style="left:687px;top:374px;width:67px;height:23px"></div>
<span class="t" style="left:687px;width:67px;text-align:center;top:380px;font-size:13px;">Adressen</span>
<div class="tab" style="left:757px;top:374px;width:60px;height:23px"></div>
<span class="t" style="left:757px;width:60px;text-align:center;top:380px;font-size:13px;">Statistik</span>
<div class="tab" style="left:820px;top:374px;width:42px;height:23px"></div>
<span class="t" style="left:820px;width:42px;text-align:center;top:380px;font-size:13px;">Notiz</span>
<div class="tab" style="left:865px;top:374px;width:102px;height:23px"></div>
<span class="t" style="left:865px;width:102px;text-align:center;top:380px;font-size:13px;">Kunden-Gruppe</span>
<div class="tab" style="left:970px;top:374px;width:107px;height:23px"></div>
<span class="t" style="left:970px;width:107px;text-align:center;top:380px;font-size:13px;">Ansprechpartner</span>
<div class="tab" style="left:1080px;top:374px;width:90px;height:23px"></div>
<span class="t" style="left:1080px;width:90px;text-align:center;top:380px;font-size:13px;">Anlieferzeiten</span>
<div style="left:1173px;top:374px;width:42px;height:24px;background:#CDCDCD;border-right:1px solid #8090AA;border-radius:4px 5px 0 0;border-top:1px solid #fff;border-left:1px solid #fff"></div>
<span class="t" style="left:1173px;width:41px;text-align:center;top:380px;font-size:13px;">Profil</span>
<div style="left:341px;top:397px;width:890px;height:317px;background:#D6D6D6;border-top:1px solid #fff;border-left:1px solid #fff;border-right:1px solid #8090AA"></div>
<div style="left:342px;top:398px;width:888px;height:2px;background:#CFCFCF"></div>
<div style="left:1174px;top:397px;width:40px;height:3px;background:#CDCDCD"></div>
<span class="t" style="left:384px;top:412px;font-size:16px;font-weight:bold;line-height:18px;transform:none">Jahr</span>
<div class="in" style="left:426px;top:408px;width:64px;height:21px;background:#fff"></div>
<span class="t" style="left:428px;top:411px;font-size:16px;font-weight:bold;line-height:18px;transform:none">2015</span>
<div style="left:422px;top:435px;width:179px;height:141px;border:1px solid #8F9CB2;box-shadow:inset 1px 1px 0 #fff, 1px 1px 0 #fff"></div>
<span class="t" style="left:436px;top:440px;font-size:13px;font-weight:bold;letter-spacing:0.2px">Umsatz</span>
<svg style="left:442px;top:461px" width="12" height="12" viewBox="0 0 12 12"><circle cx="6" cy="6" r="5" fill="#fff"/><path d="M3.5 10.33 A5 5 0 1 1 10.33 3.5" stroke="#101828" stroke-width="1.1" fill="none"/><path d="M11.5 6 A5.5 5.5 0 0 1 3.25 10.76" stroke="#fff" stroke-width="1" fill="none"/></svg>
<span class="t" style="left:456px;top:460px;font-size:13px;">0 - 1 MIO</span>
<svg style="left:442px;top:484px" width="12" height="12" viewBox="0 0 12 12"><circle cx="6" cy="6" r="5" fill="#fff"/><path d="M3.5 10.33 A5 5 0 1 1 10.33 3.5" stroke="#101828" stroke-width="1.1" fill="none"/><path d="M11.5 6 A5.5 5.5 0 0 1 3.25 10.76" stroke="#fff" stroke-width="1" fill="none"/></svg>
<span class="t" style="left:456px;top:483px;font-size:13px;">1 - 2 MIO</span>
<svg style="left:442px;top:508px" width="12" height="12" viewBox="0 0 12 12"><circle cx="6" cy="6" r="5" fill="#fff"/><path d="M3.5 10.33 A5 5 0 1 1 10.33 3.5" stroke="#101828" stroke-width="1.1" fill="none"/><path d="M11.5 6 A5.5 5.5 0 0 1 3.25 10.76" stroke="#fff" stroke-width="1" fill="none"/></svg>
<span class="t" style="left:456px;top:507px;font-size:13px;">2 - 3 MIO</span>
<svg style="left:442px;top:531px" width="12" height="12" viewBox="0 0 12 12"><circle cx="6" cy="6" r="5" fill="#fff"/><path d="M3.5 10.33 A5 5 0 1 1 10.33 3.5" stroke="#101828" stroke-width="1.1" fill="none"/><path d="M11.5 6 A5.5 5.5 0 0 1 3.25 10.76" stroke="#fff" stroke-width="1" fill="none"/><circle cx="6" cy="6" r="3" fill="#1F2A40"/></svg>
<span class="t" style="left:456px;top:530px;font-size:13px;">3 - 4 MIO</span>
<svg style="left:442px;top:554px" width="12" height="12" viewBox="0 0 12 12"><circle cx="6" cy="6" r="5" fill="#fff"/><path d="M3.5 10.33 A5 5 0 1 1 10.33 3.5" stroke="#101828" stroke-width="1.1" fill="none"/><path d="M11.5 6 A5.5 5.5 0 0 1 3.25 10.76" stroke="#fff" stroke-width="1" fill="none"/></svg>
<span class="t" style="left:456px;top:553px;font-size:13px;"> &gt; 4 MIO</span>
<div style="left:617px;top:435px;width:179px;height:141px;border:1px solid #8F9CB2;box-shadow:inset 1px 1px 0 #fff, 1px 1px 0 #fff"></div>
<span class="t" style="left:631px;top:440px;font-size:13px;font-weight:bold;letter-spacing:0.28px">Mitarbeiterzahl</span>
<svg style="left:637px;top:461px" width="12" height="12" viewBox="0 0 12 12"><circle cx="6" cy="6" r="5" fill="#fff"/><path d="M3.5 10.33 A5 5 0 1 1 10.33 3.5" stroke="#101828" stroke-width="1.1" fill="none"/><path d="M11.5 6 A5.5 5.5 0 0 1 3.25 10.76" stroke="#fff" stroke-width="1" fill="none"/></svg>
<span class="t" style="left:651px;top:460px;font-size:13px;">0 - 10</span>
<svg style="left:637px;top:484px" width="12" height="12" viewBox="0 0 12 12"><circle cx="6" cy="6" r="5" fill="#fff"/><path d="M3.5 10.33 A5 5 0 1 1 10.33 3.5" stroke="#101828" stroke-width="1.1" fill="none"/><path d="M11.5 6 A5.5 5.5 0 0 1 3.25 10.76" stroke="#fff" stroke-width="1" fill="none"/><circle cx="6" cy="6" r="3" fill="#1F2A40"/></svg>
<span class="t" style="left:651px;top:483px;font-size:13px;">10 - 50</span>
<svg style="left:637px;top:508px" width="12" height="12" viewBox="0 0 12 12"><circle cx="6" cy="6" r="5" fill="#fff"/><path d="M3.5 10.33 A5 5 0 1 1 10.33 3.5" stroke="#101828" stroke-width="1.1" fill="none"/><path d="M11.5 6 A5.5 5.5 0 0 1 3.25 10.76" stroke="#fff" stroke-width="1" fill="none"/></svg>
<span class="t" style="left:651px;top:507px;font-size:13px;"> &gt; 50</span>
<span class="t" style="left:359px;top:588px;font-size:13px;">Geschäftsführer</span>
<div class="in" style="left:458px;top:585px;width:336px;height:46px"></div>
<div style="left:778px;top:586px;width:15px;height:44px;background:#8898B2"></div>
<div style="left:779px;top:587px;width:13px;height:42px;background:#CCCCCC;border:1px solid #fff;border-radius:6px"></div>
<div style="left:780px;top:600px;width:11px;height:2px;background:#6A7A98"></div>
<div style="left:780px;top:614px;width:11px;height:2px;background:#6A7A98"></div>
<svg style="left:781px;top:592px" width="9" height="5" viewBox="0 0 9 5"><path d="M0 5H9L4.5 0Z" fill="#6E7E9A"/></svg>
<svg style="left:781px;top:620px" width="9" height="5" viewBox="0 0 9 5"><path d="M0 0H9L4.5 5Z" fill="#6E7E9A"/></svg>
<svg style="left:782px;top:604px" width="8" height="8" viewBox="0 0 8 8"><rect x="5" y="1" width="2" height="2" fill="#fff"/><rect x="1" y="5" width="2" height="2" fill="#fff"/><rect x="6" y="2" width="1" height="1" fill="#999"/><rect x="2" y="6" width="1" height="1" fill="#999"/></svg>
<span class="t" style="left:461px;top:591px;font-size:13px;">Stark Kundenorientiert</span>
<span class="t" style="left:366px;top:640px;font-size:13px;">Gründungsjahr</span>
<div class="in" style="left:458px;top:638px;width:66px;height:21px;background:#fff"></div>
<span class="t" style="left:461px;top:642px;font-size:13px;">1966</span>
<div style="left:365px;top:667px;width:760px;height:41px;border:1px solid #111;border-radius:17px"></div>
<span class="t" style="left:427px;top:678px;font-size:13px;">Erfasst</span>
<div class="in" style="left:475px;top:675px;width:115px;height:23px;background:#E8E8E8"></div>
<span class="t" style="left:478px;top:679px;font-size:13px;">19.05.2015 10:43</span>
<div class="in" style="left:591px;top:675px;width:117px;height:23px;background:#E8E8E8"></div>
<span class="t" style="left:594px;top:679px;font-size:13px;">REFLEX</span>
<span class="t" style="left:770px;top:678px;font-size:13px;">Geändert</span>
<div class="in" style="left:831px;top:675px;width:116px;height:23px;background:#E8E8E8"></div>
<span class="t" style="left:834px;top:679px;font-size:13px;">19.05.2015 10:46</span>
<div class="in" style="left:948px;top:675px;width:117px;height:23px;background:#E8E8E8"></div>
<span class="t" style="left:951px;top:679px;font-size:13px;">REFLEX</span>
<span class="t" style="left:828px;top:412px;font-size:13px;">Unternehmensstruktur</span>
<div class="in" style="left:828px;top:435px;width:387px;height:92px"></div>
<div style="left:1199px;top:436px;width:15px;height:90px;background:#8898B2"></div>
<div style="left:1200px;top:437px;width:13px;height:88px;background:#CCCCCC;border:1px solid #fff;border-radius:6px"></div>
<div style="left:1201px;top:450px;width:11px;height:2px;background:#6A7A98"></div>
<div style="left:1201px;top:510px;width:11px;height:2px;background:#6A7A98"></div>
<svg style="left:1202px;top:442px" width="9" height="5" viewBox="0 0 9 5"><path d="M0 5H9L4.5 0Z" fill="#6E7E9A"/></svg>
<svg style="left:1202px;top:516px" width="9" height="5" viewBox="0 0 9 5"><path d="M0 0H9L4.5 5Z" fill="#6E7E9A"/></svg>
<svg style="left:1203px;top:477px" width="8" height="8" viewBox="0 0 8 8"><rect x="5" y="1" width="2" height="2" fill="#fff"/><rect x="1" y="5" width="2" height="2" fill="#fff"/><rect x="6" y="2" width="1" height="1" fill="#999"/><rect x="2" y="6" width="1" height="1" fill="#999"/></svg>
<span class="t" style="left:828px;top:542px;font-size:13px;">Notiz</span>
<div class="in" style="left:828px;top:565px;width:387px;height:92px"></div>
<div style="left:1199px;top:566px;width:15px;height:90px;background:#8898B2"></div>
<div style="left:1200px;top:567px;width:13px;height:88px;background:#CCCCCC;border:1px solid #fff;border-radius:6px"></div>
<div style="left:1201px;top:580px;width:11px;height:2px;background:#6A7A98"></div>
<div style="left:1201px;top:640px;width:11px;height:2px;background:#6A7A98"></div>
<svg style="left:1202px;top:572px" width="9" height="5" viewBox="0 0 9 5"><path d="M0 5H9L4.5 0Z" fill="#6E7E9A"/></svg>
<svg style="left:1202px;top:646px" width="9" height="5" viewBox="0 0 9 5"><path d="M0 0H9L4.5 5Z" fill="#6E7E9A"/></svg>
<svg style="left:1203px;top:607px" width="8" height="8" viewBox="0 0 8 8"><rect x="5" y="1" width="2" height="2" fill="#fff"/><rect x="1" y="5" width="2" height="2" fill="#fff"/><rect x="6" y="2" width="1" height="1" fill="#999"/><rect x="2" y="6" width="1" height="1" fill="#999"/></svg>
<span class="t" style="left:831px;top:571px;font-size:13px;">Familienunternehmen -</span>
<span class="t" style="left:831px;top:589px;font-size:13px;">Vater, Mutter, Sohn und Tochter</span>
</body></html>
